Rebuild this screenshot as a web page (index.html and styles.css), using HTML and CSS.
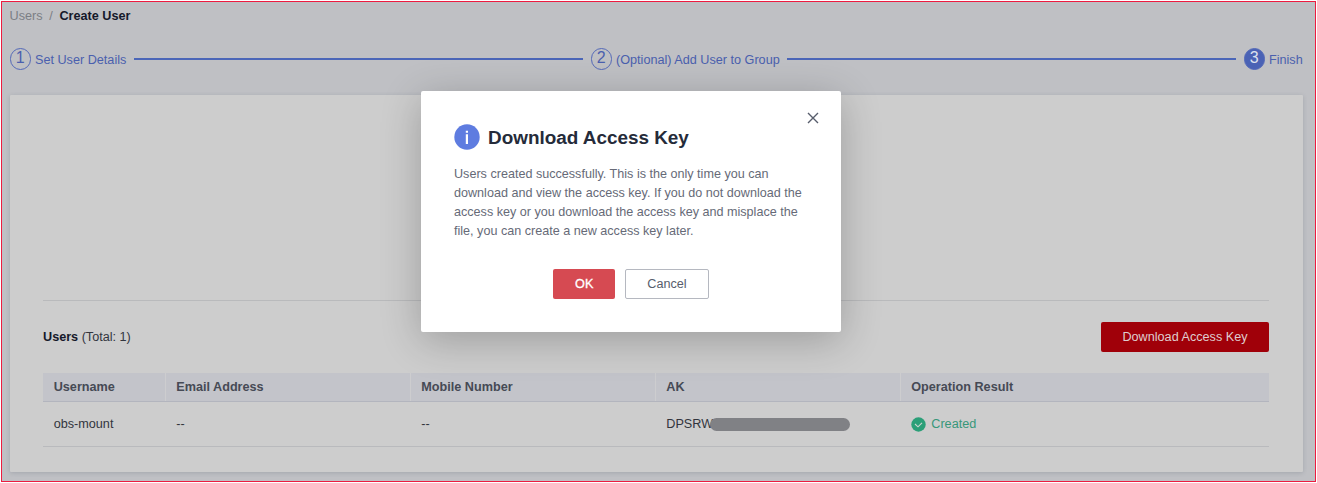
FILE: index.html
```html
<!DOCTYPE html>
<html lang="en">
<head>
<meta charset="utf-8">
<title>Create User</title>
<link rel="stylesheet" href="styles.css">
</head>
<body>
<div class="page">
  <nav class="breadcrumb"><span class="crumb">Users</span><span class="crumb">/</span><b class="current">Create User</b></nav>
  <div class="steps">
    <span class="badge">1</span><span class="step-label step-one">Set User Details</span>
    <span class="line"></span>
    <span class="badge">2</span><span class="step-label step-two">(Optional) Add User to Group</span>
    <span class="line"></span>
    <span class="badge active">3</span><span class="step-label step-three">Finish</span>
  </div>
  <main class="card">
    <div class="summary"></div>
    <div class="toolbar">
      <div class="total"><b>Users</b> (Total: 1)</div>
      <button class="download">Download Access Key</button>
    </div>
    <div class="row head">
      <div>Username</div><div>Email Address</div><div>Mobile Number</div><div>AK</div><div>Operation Result</div>
    </div>
    <div class="row body">
      <div>obs-mount</div><div>--</div><div>--</div>
      <div class="key">DPSRW<span class="mask"></span></div>
      <div class="created">
        <svg width="15" height="15" viewBox="0 0 15 15"><circle cx="7.5" cy="7.5" r="7.2" fill="#2b9f78"/><path d="M4 7 7 9.8 11 5.8" fill="none" stroke="#cdd5d1" stroke-width="1.1"/></svg>
        <span>Created</span>
      </div>
    </div>
  </main>
  <section class="modal">
    <svg class="close" width="12" height="12" viewBox="0 0 12 12"><path d="M1 1 11 11M11 1 1 11" stroke="#575d6c" stroke-width="1.4"/></svg>
    <header class="title">
      <svg width="26" height="26" viewBox="0 0 26 26"><circle cx="13" cy="13" r="12.7" fill="#5e7ce0"/><path d="M11.8 10.3h2.2v9.7h-2.2zM11.8 6.7h2.2v2h-2.2z" fill="#fff"/></svg>
      <h1>Download Access Key</h1>
    </header>
    <p class="message">Users created successfully. This is the only time you can<br>download and view the access key. If you do not download the<br>access key or you download the access key and misplace the<br>file, you can create a new access key later.</p>
    <div class="actions"><button class="ok">OK</button><button class="cancel">Cancel</button></div>
  </section>
</div>
</body>
</html>
```
FILE: styles.css
```css
* { box-sizing: border-box; }
body { margin: 0; padding: 1px; background: #fff; font: 12.65px/18px "Liberation Sans", Arial, sans-serif; color: #32353d; overflow: hidden; }
button { font: inherit; padding: 0; border: 0; border-radius: 2px; }
.page { position: relative; width: 1315px; height: 481px; border: 1px solid #ed1c40; background: #bfc0c4; padding: 5px 12px 0 8px; overflow: hidden; }
.breadcrumb { display: flex; gap: 6.7px; height: 18px; margin-left: -0.5px; color: #7b7e85; }
.current { color: #15182a; }
.steps { display: flex; align-items: center; height: 22px; margin: 23px 0 25px -0.5px; color: #4a5fae; }
.badge { width: 21.5px; height: 21.5px; flex: none; border: 1px solid #5469b8; border-radius: 50%; font-size: 16px; line-height: 17px; text-align: center; }
.badge.active { background: #4a62b5; color: #dce0ed; }
.step-label { flex: none; margin-left: 4px; padding-top: 1px; white-space: nowrap; }
.step-one { width: 91px; }
.step-two { width: 163px; }
.step-three { width: 34px; }
.line { flex: 1; height: 2px; margin: 0 8px; background: #4b66b8; }
.card { height: 377px; background: #cdcdcd; padding: 0 34px 0 33px; border-radius: 1px; box-shadow: 0 1px 4px rgba(70, 76, 94, .22); }
.summary { height: 206px; border-bottom: 1px solid #b9babc; }
.toolbar { display: flex; justify-content: space-between; align-items: center; height: 72px; }
.total b { color: #15182a; }
.download { width: 168px; height: 30px; padding-bottom: 1px; background: #a00009; color: #dfcdcf; }
.row { display: grid; grid-template-columns: 122.6px 245px 245px 245px 1fr; align-items: center; }
.row > div { padding-left: 10.7px; }
.head { height: 29px; background: #c3c4ca; border-bottom: 1px solid #b3b5be; font-weight: bold; color: #464a55; }
.head > div { height: 28px; line-height: 29px; border-right: 1px solid #cdcdcf; }
.head > div:last-child { border: 0; }
.body { height: 45px; border-bottom: 1px solid #b9babd; }
.key { display: flex; align-items: center; }
.mask { width: 140px; height: 13px; margin: 1px 0 0 -3px; border-radius: 7px; background: #808185; z-index: 1; }
.created { display: flex; align-items: center; gap: 5px; color: #37977a; }
.modal { position: absolute; left: 419px; top: 89px; width: 420px; height: 241px; padding: 32px 33px; border-radius: 2px; background: #fff; box-shadow: 0 8px 40px rgba(0, 0, 0, .24); color: #666a77; }
.close { position: absolute; right: 22px; top: 21px; }
.title { display: flex; align-items: center; gap: 8px; height: 28px; }
.title h1 { margin: 0; padding-top: 1px; font-size: 18.9px; line-height: 28px; color: #252b3a; white-space: nowrap; }
.message { margin: 14px 0 28px; line-height: 19px; font-size: 12.6px; white-space: nowrap; }
.actions { display: flex; justify-content: center; gap: 10px; }
.ok { width: 62px; height: 30px; padding-bottom: 1px; background: #d64a52; color: #fff; -webkit-text-stroke: .3px #fff; }
.cancel { width: 83.5px; height: 30px; padding-bottom: 1px; border: 1px solid #b5b8c0; background: #fff; color: #575d6c; }
```
